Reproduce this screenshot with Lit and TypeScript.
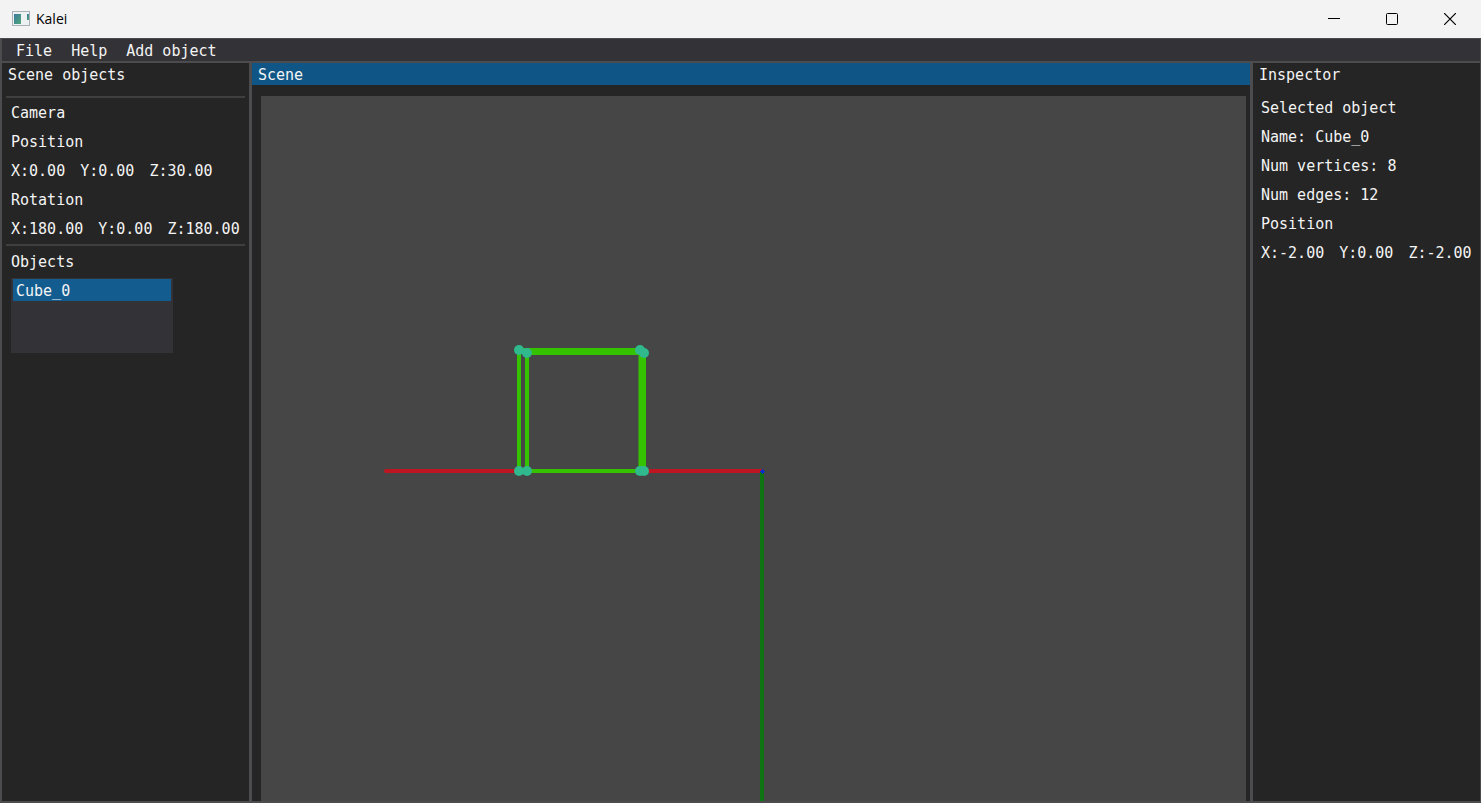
import { LitElement, html, css, svg } from "lit";
import { customElement, property, state } from "lit/decorators.js";

interface Vec3 {
  x: string;
  y: string;
  z: string;
}

const EDGES: Array<[number, number, number, number]> = [
  [258, 254, 379, 254],
  [266, 257, 383, 257],
  [258, 375, 383, 375],
  [258, 254, 258, 375],
  [266, 257, 266, 375],
  [379.5, 254, 379.5, 375],
  [383, 257, 383, 375],
  [258, 254, 266, 257],
  [379, 254, 383, 257],
];

const VERTICES: Array<[number, number]> = [
  [258, 254],
  [266, 257],
  [379, 254],
  [383, 257],
  [258, 375],
  [266, 375],
  [379, 375],
  [383, 375],
];

@customElement("vector-row")
class VectorRow extends LitElement {
  @property({ attribute: false }) value: Vec3 = { x: "0.00", y: "0.00", z: "0.00" };

  static styles = css`
    :host {
      display: flex;
      gap: 15px;
      white-space: nowrap;
    }
  `;

  render() {
    return html`<span>X:${this.value.x}</span><span>Y:${this.value.y}</span><span>Z:${this.value.z}</span>`;
  }
}

@customElement("scene-view")
class SceneView extends LitElement {
  static styles = css`
    :host {
      display: block;
      min-height: 0;
      background: #464646;
    }
    .canvas {
      display: block;
      width: 100%;
      height: 100%;
    }
    .edge {
      stroke: #35c200;
      stroke-width: 4;
    }
    .vertex {
      fill: #2fb98c;
    }
    .axis-x {
      stroke: #bd1622;
      stroke-width: 4;
      stroke-linecap: round;
    }
    .axis-y {
      stroke: #0f7512;
      stroke-width: 4;
    }
    .axis-z {
      fill: #0b2bd0;
    }
  `;

  render() {
    return html`
      <svg class="canvas" viewBox="0 0 985 705" preserveAspectRatio="xMidYMin slice" role="img" aria-label="Scene">
        <line class="axis-x" x1="125" y1="375" x2="500" y2="375"></line>
        <line class="axis-y" x1="501" y1="376" x2="501" y2="706"></line>
        <path class="axis-z" d="M499 375h1v-1h1v-1h1v1h1v1h1v1h-1v1h-1v1h-1v-1h-1v-1h-1z"></path>
        ${EDGES.map(([a, b, c, d]) => svg`<line class="edge" x1=${a} y1=${b} x2=${c} y2=${d}></line>`)}
        ${VERTICES.map(([x, y]) => svg`<circle class="vertex" cx=${x} cy=${y} r="5"></circle>`)}
      </svg>
    `;
  }
}

@customElement("app-root")
class AppRoot extends LitElement {
  @state() private selected = "Cube_0";
  private objects = ["Cube_0"];

  static styles = css`
    :host {
      display: flex;
      flex-direction: column;
      box-sizing: border-box;
      height: 100vh;
      overflow: hidden;
      background: #4c4c4e;
      color: #f4f4f4;
      font: 15px/20px "DejaVu Sans Mono", monospace;
    }
    button {
      font: inherit;
      color: inherit;
      border: 0;
      margin: 0;
      padding: 0;
      background: none;
      text-align: left;
    }
    h2,
    p,
    ul {
      margin: 0;
      padding: 0;
      font: inherit;
      list-style: none;
    }
    .titlebar {
      display: flex;
      align-items: center;
      height: 38px;
      flex: none;
      padding: 0 2px 0 12px;
      background: #f3f3f3;
      color: #000;
    }
    .title {
      flex: 1;
      padding-left: 6px;
      font: 14px/20px "Open Sans", sans-serif;
    }
    .app-icon {
      display: block;
    }
    .win {
      display: grid;
      place-items: center;
      width: 58px;
      height: 38px;
    }
    .win svg {
      display: block;
    }
    .frame {
      display: flex;
      flex-direction: column;
      flex: 1;
      min-height: 0;
      padding: 1px 1px 2px 2px;
      gap: 2px;
    }
    .menubar {
      display: flex;
      gap: 19px;
      padding: 2px 0 0 14px;
      background: #333337;
      flex: none;
    }
    .columns {
      display: grid;
      grid-template-columns: 247px minmax(0, 1fr) 227px;
      gap: 3px;
      flex: 1;
      min-height: 0;
    }
    .panel {
      display: flex;
      flex-direction: column;
      min-height: 0;
      min-width: 0;
      background: #252525;
      overflow: hidden;
    }
    .heading {
      flex: none;
      padding: 2px 6px 0;
    }
    .heading.active {
      background: #0f5686;
    }
    .group {
      padding: 1px 9px 0;
      line-height: 29px;
    }
    .inspector {
      padding: 9px 8px;
    }
    .rule {
      height: 2px;
      flex: none;
      margin: 0 4px;
      background: #3f3f3f;
    }
    .rule.top {
      margin-top: 11px;
    }
    .group.objects {
      padding-top: 2px;
    }
    .list {
      width: 158px;
      height: 73px;
      margin-top: 1px;
      padding: 1px 2px;
      background: #333337;
    }
    .item {
      display: block;
      width: 100%;
      padding: 2px 3px 0;
      line-height: 20px;
    }
    .item.on {
      background: #135c8f;
    }
    .view {
      flex: 1;
      margin: 11px 4px 0 9px;
    }
  `;

  render() {
    return html`
      <header class="titlebar">
        <svg class="app-icon" width="18" height="16" viewBox="0 0 18 16" aria-hidden="true">
          <defs>
            <linearGradient id="g" x1="0" y1="0" x2="1" y2="1">
              <stop offset="0" stop-color="#3f78a0"></stop>
              <stop offset="1" stop-color="#4da878"></stop>
            </linearGradient>
          </defs>
          <rect x="0.5" y="0.5" width="17" height="14" fill="#eef1f2" stroke="#a9b1b6"></rect>
          <rect x="2" y="3" width="7" height="10" fill="url(#g)"></rect>
          <rect x="15" y="3" width="2" height="6" fill="url(#g)"></rect>
        </svg>
        <span class="title">Kalei</span>
        <button class="win" aria-label="Minimize">
          <svg width="12" height="12" viewBox="0 0 12 12"><path d="M0 5.5h12" stroke="#000"></path></svg>
        </button>
        <button class="win" aria-label="Maximize">
          <svg width="12" height="12" viewBox="0 0 12 12"><rect x="0.5" y="0.5" width="11" height="11" rx="1" fill="none" stroke="#000"></rect></svg>
        </button>
        <button class="win" aria-label="Close">
          <svg width="12" height="12" viewBox="0 0 12 12"><path d="M0 0L12 12M12 0L0 12" stroke="#000" stroke-width="1.2"></path></svg>
        </button>
      </header>
      <div class="frame">
        <nav class="menubar">
          <button>File</button>
          <button>Help</button>
          <button>Add object</button>
        </nav>
        <main class="columns">
          <section class="panel">
            <h2 class="heading">Scene objects</h2>
            <div class="rule top"></div>
            <div class="group">
              <p>Camera</p>
              <p>Position</p>
              <vector-row .value=${{ x: "0.00", y: "0.00", z: "30.00" }}></vector-row>
              <p>Rotation</p>
              <vector-row .value=${{ x: "180.00", y: "0.00", z: "180.00" }}></vector-row>
            </div>
            <div class="rule"></div>
            <div class="group objects">
              <p>Objects</p>
              <ul class="list">
                ${this.objects.map(
                  (name) => html`<li>
                    <button
                      class="item ${name === this.selected ? "on" : ""}"
                      aria-pressed=${name === this.selected}
                      @click=${() => (this.selected = name)}
                    >${name}</button>
                  </li>`
                )}
              </ul>
            </div>
          </section>
          <section class="panel">
            <h2 class="heading active">Scene</h2>
            <scene-view class="view"></scene-view>
          </section>
          <section class="panel">
            <h2 class="heading">Inspector</h2>
            <div class="group inspector">
              <p>Selected object</p>
              <p>Name: ${this.selected}</p>
              <p>Num vertices: 8</p>
              <p>Num edges: 12</p>
              <p>Position</p>
              <vector-row .value=${{ x: "-2.00", y: "0.00", z: "-2.00" }}></vector-row>
            </div>
          </section>
        </main>
      </div>
    `;
  }
}
